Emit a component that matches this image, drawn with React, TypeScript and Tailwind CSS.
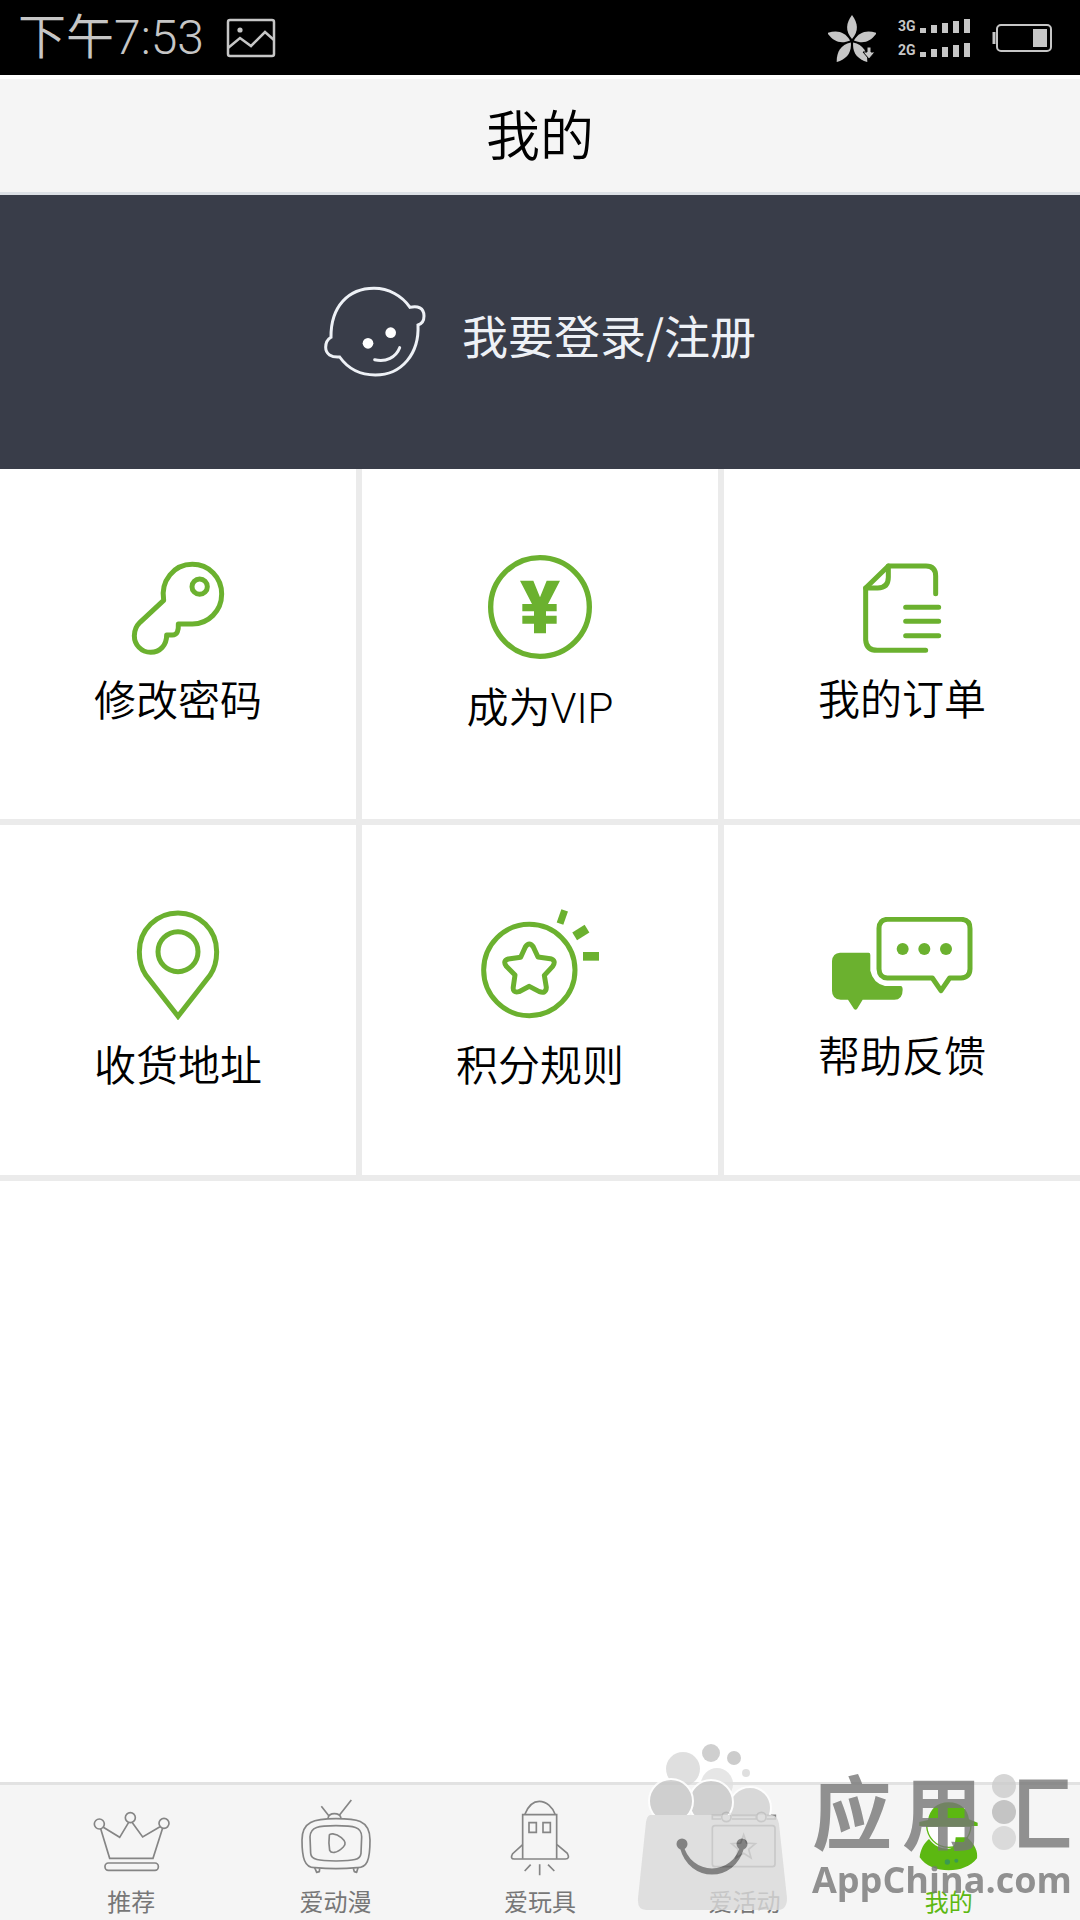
import React from "react";

const STROKE = "#6bb12f";

const KeyIcon = () => (
  <svg viewBox="216 123 282 282" className="w-[94px] h-[94px]" fill="none" stroke={STROKE} strokeWidth="15" strokeLinejoin="round">
    <path d="M314 241 C304 182 345 133 400 133 C450 133 488 172 488 222 C488 273 448 312 400 312 L358 312 C359 332 355 345 340 345 L323 345 C323 376 303 397 275 397 C247 397 226 374 226 347 C226 330 232 318 243 307 Z" />
    <circle cx="422" cy="200" r="23" />
  </svg>
);

const YenIcon = () => (
  <svg viewBox="201 105 318 324" className="w-[106px] h-[108px]" fill="none" stroke={STROKE}>
    <circle cx="360" cy="264" r="148" strokeWidth="16" />
    <path d="M300 185h40l20 50 20-50h40l-36 70h26v22h-32v13h32v24h-32v29h-36v-29h-35v-24h35v-13h-35v-22h29z" fill={STROKE} stroke="none" />
  </svg>
);

const OrderIcon = () => (
  <svg viewBox="246 126 240 276" className="w-[80px] h-[92px]" fill="none" stroke={STROKE} strokeWidth="15" strokeLinecap="round" strokeLinejoin="round">
    <path d="M467 221V168Q467 138 438 138H325L257 204V360Q259 391 292 391H437" />
    <path d="M325 138V172Q325 204 293 204H257" />
    <path d="M377 262h99M377 304h99M377 347h99" />
  </svg>
);

const PinIcon = () => (
  <svg viewBox="226 84 252 333" className="w-[84px] h-[111px]" fill="none" stroke={STROKE} strokeWidth="15">
    <path d="M352 406L256 283C243 264 236 240 236 212C236 146 288 96 352 96C416 96 468 146 468 212C468 240 461 264 448 283Z" />
    <circle cx="352" cy="212" r="60" />
  </svg>
);

const PointsIcon = () => (
  <svg viewBox="183 84 354 336" className="w-[118px] h-[112px]" fill="none" stroke={STROKE} strokeWidth="15" strokeLinejoin="round">
    <circle cx="328" cy="270" r="137" />
    <path d="M316 201Q328 183 340 201L354 231L391 236Q410 242 398 259L373 286L379 322Q378 342 358 335L328 319L297 335Q277 340 280 320L285 285L259 259Q247 242 265 237L302 232Z" />
    <path d="M420 131L434 91" strokeWidth="21" />
    <path d="M464 169L501 146" strokeWidth="27" />
    <path d="M489 229H537" strokeWidth="26" />
  </svg>
);

const ChatIcon = () => (
  <svg viewBox="156 114 423 282" className="w-[141px] h-[94px]" fill={STROKE}>
    <path d="M180 221H266Q271 221 271 228V275Q279 312 315 321H362Q368 322 368 332Q368 362 343 362H248L231 390Q227 395 222 390L204 362H182Q156 360 156 335V246Q158 222 180 221Z" />
    <path d="M322 121H544Q570 122 570 149V270Q569 296 543 297H509L483 335L457 297H322Q298 296 297 270V148Q298 122 322 121Z" fill="none" stroke={STROKE} strokeWidth="15" strokeLinejoin="round" />
    <circle cx="368" cy="210" r="18" />
    <circle cx="433" cy="210" r="18" />
    <circle cx="498" cy="210" r="18" />
  </svg>
);

const FaceIcon = () => (
  <svg viewBox="72 78 306 276" className="w-[102px] h-[92px]" fill="none" stroke="#eef1f6" strokeWidth="9" strokeLinecap="round">
    <path d="M93 232C92 140 145 85 222 85C266 85 306 107 330 142C353 136 372 144 372 168C372 183 364 192 354 195C358 280 306 345 226 345C180 345 144 326 119 291C94 293 77 282 77 262C77 247 83 238 93 232Z" />
    <path d="M224 299C258 307 288 292 299 263" />
    <circle cx="204" cy="250" r="16" fill="#fff" stroke="none" />
    <circle cx="272" cy="218" r="16" fill="#fff" stroke="none" />
  </svg>
);

const CrownIcon = () => (
  <svg viewBox="93 81 240 243" className="w-[80px] h-[81px]" fill="none" stroke="#858585" strokeWidth="5">
    <circle cx="118" cy="162" r="15" />
    <circle cx="211" cy="143" r="15" />
    <circle cx="312" cy="160" r="15" />
    <path d="M122 176L149 265H279L308 174M130 172L179 202L206 157M216 157L248 201L300 170" />
    <rect x="135" y="279" width="160" height="22" rx="10" />
  </svg>
);

const TvIcon = () => (
  <svg viewBox="707 81 240 243" className="w-[80px] h-[81px]" fill="none" stroke="#858585" strokeWidth="5" strokeLinejoin="round">
    <path d="M783 109L806 138M873 90L837 136M803 144Q806 131 822 131Q839 131 842 144" />
    <path d="M827 146C885 146 929 148 929 210C929 272 920 294 890 293Q827 299 764 293C732 294 725 262 725 210C725 155 760 146 827 146Z" />
    <path d="M827 167C880 167 904 170 904 200L902 250C900 270 880 272 827 273C775 272 752 270 751 250L749 200C750 170 775 167 827 167Z" />
    <path d="M807 196C806 190 825 188 843 203Q862 219 849 231C828 252 812 250 808 241Q804 220 807 196Z" />
    <path d="M763 293L769 307L777 305L778 295M879 295L882 305L889 307L893 293" />
  </svg>
);

const RocketIcon = () => (
  <svg viewBox="180 201 240 243" className="w-[80px] h-[81px]" fill="none" stroke="#858585" strokeWidth="5">
    <path d="M248 386V254H350V386M255 252C263 232 276 214 298 214C320 214 337 232 345 252" />
    <path d="M248 344L218 371Q209 387 223 387H376Q391 387 382 370L351 344" />
    <path d="M267 278H289V307H267ZM309 278H331V307H309Z" />
    <path d="M272 404L254 423M299 403V436M324 404L343 423" />
  </svg>
);

const CalendarIcon = () => (
  <svg viewBox="793 201 240 243" className="w-[80px] h-[81px]" fill="none" stroke="#858585" strokeWidth="5">
    <path d="M844 267H818V256H844M876 256H950V267H876M980 256H1007V267H980" />
    <circle cx="860" cy="261" r="14" />
    <circle cx="965" cy="261" r="14" />
    <rect x="818" y="287" width="188" height="123" rx="8" />
    <path d="M912 314L921 339L947 341L927 358L934 384L912 370L889 384L896 358L876 341L903 339Z" />
  </svg>
);

const MineIcon = () => (
  <svg viewBox="386 171 240 243" className="w-[80px] h-[81px]" fill="#5cb811">
    <path d="M443 240C448 208 470 187 505 187C540 187 562 207 566 238L592 248V258H417V246Z" />
    <path d="M439 258C441 290 465 322 505 322C545 322 570 292 572 258Z" fill="#fff" stroke="#5cb811" strokeWidth="4" />
    <path d="M446 297C462 318 480 326 505 326C518 326 524 318 526 292H560C585 315 593 335 590 355C570 380 540 391 505 391C470 391 435 378 418 352C420 330 430 310 446 297Z" />
    <circle cx="501" cy="366" r="8" fill="#3b9a50" />
    <circle cx="528" cy="362" r="6" fill="#3b9a50" />
  </svg>
);

const menu = [
  { label: "修改密码", icon: <KeyIcon /> },
  { label: "成为VIP", icon: <YenIcon /> },
  { label: "我的订单", icon: <OrderIcon /> },
  { label: "收货地址", icon: <PinIcon /> },
  { label: "积分规则", icon: <PointsIcon /> },
  { label: "帮助反馈", icon: <ChatIcon /> },
];

const tabs = [
  { label: "推荐", icon: <CrownIcon /> },
  { label: "爱动漫", icon: <TvIcon /> },
  { label: "爱玩具", icon: <RocketIcon /> },
  { label: "爱活动", icon: <CalendarIcon /> },
  { label: "我的", icon: <MineIcon />, active: true },
];

const bars = [5, 8, 10, 12, 14];

const Signal = ({ name }: { name: string }) => (
  <div className="flex items-end gap-1">
    <span className="w-[18px] text-[14px] leading-[14px] font-bold font-[Roboto,sans-serif]">
      {name}
    </span>
    <div className="flex items-end gap-[5px]">
      {bars.map((h) => (
        <i key={h} className="block w-[6px] bg-[#c6c6c6]" style={{ height: h }} />
      ))}
    </div>
  </div>
);

const StatusBar = () => (
  <div className="h-[75px] bg-black text-[#c6c6c6] flex items-center justify-between pl-[18px] pr-[28px]">
    <div className="flex items-center gap-[22px]">
      <span className="text-[48px] leading-[60px] font-[350] font-[Roboto,'Noto_Sans_CJK_SC',sans-serif]">
        下午7:53
      </span>
      <svg viewBox="0 0 50 40" className="w-[50px] h-[40px]" fill="none" stroke="#c6c6c6" strokeWidth="2.5">
        <rect x="2" y="2" width="46" height="36" rx="2" />
        <path d="M2 30L14 20L25 28L39 14L48 22" />
        <circle cx="14" cy="12" r="2.6" fill="#c6c6c6" stroke="none" />
      </svg>
    </div>
    <div className="flex items-center gap-[22px]">
      <svg viewBox="0 0 48 48" className="w-[48px] h-[48px]" fill="#c6c6c6">
        {[0, 72, 144, 216, 288].map((deg) => (
          <path key={deg} d="M24 25C17 17 18 9 24 1C30 9 31 17 24 25Z" transform={`rotate(${deg} 24 27)`} />
        ))}
        <path d="M39 33h4v5h4l-6 7-6-7h4z" stroke="#000" strokeWidth="1" />
      </svg>
      <div className="flex flex-col gap-[10px]">
        <Signal name="3G" />
        <Signal name="2G" />
      </div>
      <svg viewBox="0 0 60 28" className="w-[60px] h-[28px]" fill="none" stroke="#c6c6c6" strokeWidth="2">
        <rect x="5" y="1" width="54" height="26" rx="4" />
        <path d="M2 8v12" strokeWidth="3" />
        <rect x="41" y="5" width="14" height="18" fill="#c6c6c6" stroke="none" />
      </svg>
    </div>
  </div>
);

// store watermark that lies over the tab bar
const Watermark = () => (
  <div className="absolute right-[8px] bottom-[8px] flex items-end gap-6 pointer-events-none">
    <svg viewBox="0 0 152 172" className="w-[152px] h-[172px] opacity-80">
      <circle cx="47" cy="29" r="17" fill="#d8d8d8" />
      <circle cx="75" cy="13" r="9" fill="#c4c4c4" />
      <circle cx="98" cy="18" r="7" fill="#c0c0c0" />
      <circle cx="110" cy="33" r="4" fill="#d8d8d8" />
      <circle cx="81" cy="44" r="16" fill="#e0e0e0" />
      <g stroke="#fff" strokeWidth="2">
        <circle cx="114" cy="68" r="21" fill="#d2d2d2" />
        <circle cx="75" cy="62" r="22" fill="#c6c6c6" />
        <circle cx="35" cy="61" r="22" fill="#c6c6c6" />
      </g>
      <path d="M14 75H136Q142 76 143 84L151 158Q151 170 142 170H10Q1 170 2 158L10 82Q11 76 14 75Z" fill="#dadada" />
      <circle cx="46" cy="104" r="5.5" fill="#666" />
      <circle cx="106" cy="104" r="5.5" fill="#666" />
      <path d="M46 104C54 138 98 138 106 104L107 108C98 142 54 142 45 108Z" fill="#666" stroke="#666" strokeWidth="2" />
    </svg>
    <div className="w-[260px] flex flex-col gap-2 pb-3 text-[#777777] opacity-80">
      <div className="flex justify-between text-[80px] leading-[88px] font-bold font-['Noto_Sans_CJK_SC',sans-serif]">
        <span>应</span>
        <span>用</span>
        {/* the water dots of the last character are drawn as discs */}
        <div className="relative">
          <svg viewBox="0 0 24 78" className="absolute left-0 top-2 w-[24px] h-[78px]">
            <circle cx="12" cy="14" r="12" fill="#cccccc" />
            <circle cx="12" cy="40" r="12" fill="#b8b8b8" />
            <circle cx="12" cy="66" r="12" fill="#d4d4d4" />
          </svg>
          <span className="bg-[linear-gradient(90deg,transparent_34%,#777777_34%)] bg-clip-text text-transparent">汇</span>
        </div>
      </div>
      <span className="text-[36px] leading-[40px] font-bold whitespace-nowrap font-['Open_Sans',sans-serif]">
        AppChina.com
      </span>
    </div>
  </div>
);

const App = () => {
  return (
    <div className="min-h-screen flex flex-col bg-white font-['Noto_Sans_CJK_SC',sans-serif]">
      <StatusBar />
      <header className="h-[120px] flex items-center justify-center pt-1 bg-[#f5f5f5] border-t-4 border-t-white border-b-[3px] border-b-[#dde1e6]">
        <h1 className="text-[54px] leading-[60px] font-[350] text-black font-[Roboto,'Noto_Sans_CJK_SC',sans-serif]">我的</h1>
      </header>
      <a href="#login" className="h-[274px] flex items-center justify-center gap-9 bg-[#393d49]">
        <FaceIcon />
        <span className="pt-1 text-[46px] leading-[60px] text-[#eef1f6]">我要登录/注册</span>
      </a>
      <main className="grid grid-cols-3 gap-[6px] bg-[#ebebeb] border-b-[6px] border-[#ebebeb]">
        {menu.map((item) => (
          <button key={item.label} className="h-[350px] flex flex-col items-center justify-center gap-[22px] bg-white">
            {item.icon}
            <span className="text-[42px] leading-[50px] text-black font-[350] font-[Roboto,'Noto_Sans_CJK_SC',sans-serif]">
              {item.label}
            </span>
          </button>
        ))}
      </main>
      <nav className="relative mt-auto flex px-[29px] pt-3 pb-1 bg-[#f5f5f5] border-t-[3px] border-[#e2e2e2]">
        {tabs.map((tab) => (
          <a key={tab.label} href="#tab" className="flex-1 flex flex-col items-center gap-2">
            {tab.icon}
            <span className={tab.active ? "text-[24px] leading-[30px] text-[#5cb811]" : "text-[24px] leading-[30px] text-[#777777]"}>
              {tab.label}
            </span>
          </a>
        ))}
        <Watermark />
      </nav>
    </div>
  );
};

export default App;
